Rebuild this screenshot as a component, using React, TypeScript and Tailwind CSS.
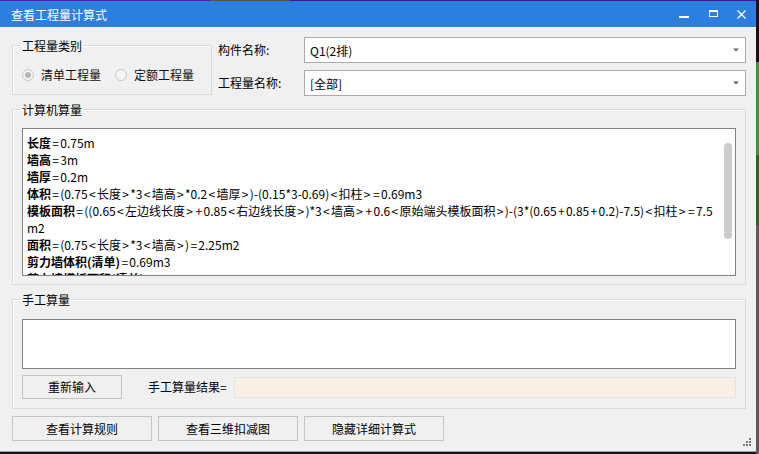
import React from "react";

const lines: [string, string][] = [
  ["长度", "=0.75m"],
  ["墙高", "=3m"],
  ["墙厚", "=0.2m"],
  ["体积", "=(0.75<长度>*3<墙高>*0.2<墙厚>)-(0.15*3-0.69)<扣柱>=0.69m3"],
  ["模板面积", "=((0.65<左边线长度>+0.85<右边线长度>)*3<墙高>+0.6<原始端头模板面积>)-(3*(0.65+0.85+0.2)-7.5)<扣柱>=7.5"],
  ["", "m2"],
  ["面积", "=(0.75<长度>*3<墙高>)=2.25m2"],
  ["剪力墙体积(清单)", "=0.69m3"],
  ["剪力墙模板面积(清单)", "=7.5m2"],
];

function Formula({ text }: { text: string }) {
  const parts = text.split(/([<>=+])/);
  return (
    <>
      {parts.map((p, i) =>
        /^[<>=+]$/.test(p) ? (
          <span key={i} className="mx-[1.3px]">{p}</span>
        ) : (
          <span key={i}>{p}</span>
        )
      )}
    </>
  );
}

function Arrow() {
  return (
    <svg width="6" height="4" viewBox="0 0 6 4" className="shrink-0">
      <path d="M0 0.5 H6 L3 3.5 Z" fill="#606060" />
    </svg>
  );
}

function Combo({ text }: { text: string }) {
  return (
    <div className="w-[442px] h-[26px] border border-[#ababab] bg-white flex items-center pl-[5px] pr-[6px]">
      <span className="flex-1 text-[12px] leading-[17px] text-black">{text}</span>
      <Arrow />
    </div>
  );
}

function Radio({ checked, label }: { checked?: boolean; label: string }) {
  return (
    <div className="flex items-center">
      <div className="w-[12px] h-[12px] rounded-full border border-[#c6c6c6] bg-[#f4f4f4] flex items-center justify-center">
        {checked && <div className="w-[6px] h-[6px] rounded-full bg-[#b4b4b4]" />}
      </div>
      <span className="ml-[7px] text-[12px] leading-[17px] text-[#111]">{label}</span>
    </div>
  );
}

function Btn({ label, w }: { label: string; w: string }) {
  return (
    <div className={`${w} h-full border border-[#c4c4c4] bg-[#f0f0f0] flex items-center justify-center text-[12px] text-black`}>
      {label}
    </div>
  );
}

export default function App() {
  return (
    <div className="w-[759px] h-[454px] bg-[#141414] overflow-hidden font-['Noto_Sans_CJK_SC',sans-serif] flex">
      <div className="flex flex-col w-[756px]">
        <div className="h-[1px] flex">
          <div className="w-[210px] bg-[#4a22b0]" />
          <div className="w-[80px] bg-[#555]" />
          <div className="flex-1 bg-[#3b1a90]" />
        </div>
        <div className="w-[756px] h-[450px] bg-[#f0f0f0] flex flex-col relative">
          {/* title bar */}
          <div className="h-[26px] bg-[#2d7fdf] flex items-center pl-[11px] text-white text-[12px] shrink-0">
            <span className="flex-1 leading-[17px]">查看工程量计算式</span>
            <div className="w-[10px] h-[2px] bg-white mr-[20px] mt-[6px]" />
            <div className="w-[9px] h-[7px] border border-white border-t-2 mr-[19px] mt-[-1px]" />
            <svg width="9" height="9" viewBox="0 0 9 9" className="mr-[10px]">
              <path d="M0.5 0.5 L8.5 8.5 M8.5 0.5 L0.5 8.5" stroke="white" strokeWidth="1.3" />
            </svg>
          </div>

          <div className="pl-[12px] flex flex-col">
            {/* top row */}
            <div className="mt-[10px] flex h-[58px]">
              <fieldset className="w-[200px] h-[58px] border border-[#d9d9d9] shadow-[inset_1px_1px_0_#fff] px-[9px]">
                <legend className="-ml-[2px] px-[2px] text-[12px] leading-[17px] text-black">工程量类别</legend>
                <div className="flex items-center mt-[12px] h-[17px]">
                  <Radio checked label="清单工程量" />
                  <div className="ml-[14px]">
                    <Radio label="定额工程量" />
                  </div>
                </div>
              </fieldset>
              <div className="ml-[6px] flex flex-col gap-[7px]">
                <div className="flex items-center">
                  <span className="w-[86px] text-[12px] text-black">构件名称:</span>
                  <Combo text="Q1(2排)" />
                </div>
                <div className="flex items-center">
                  <span className="w-[86px] text-[12px] text-black">工程量名称:</span>
                  <Combo text="[全部]" />
                </div>
              </div>
            </div>

            {/* computer */}
            <fieldset className="mt-[6px] w-[734px] h-[184px] border border-[#d9d9d9] shadow-[inset_1px_1px_0_#fff] px-[9px]">
              <legend className="-ml-[2px] px-[2px] text-[12px] leading-[17px] text-black">计算机算量</legend>
              <div className="mt-[10px] w-[714px] h-[148px] border border-[#828282] bg-white relative overflow-hidden pl-[4px] pt-[5px]">
                {lines.map(([b, r], i) => (
                  <div key={i} className="h-[17px] leading-[17px] text-[12px] text-black whitespace-nowrap">
                    {b && <span className="font-bold">{b}</span>}
                    <Formula text={r} />
                  </div>
                ))}
                <div className="absolute left-[701px] top-[14px] w-[8px] h-[96px] rounded-full bg-[#cdcdcd]" />
              </div>
            </fieldset>

            {/* manual */}
            <fieldset className="mt-[6px] w-[734px] h-[118px] border border-[#d9d9d9] shadow-[inset_1px_1px_0_#fff] px-[9px]">
              <legend className="-ml-[2px] px-[2px] text-[12px] leading-[17px] text-black">手工算量</legend>
              <div className="mt-[11px] w-[714px] h-[50px] border border-[#828282] bg-white" />
              <div className="mt-[6px] flex items-center h-[24px]">
                <div className="w-[100px] h-[24px] border border-[#c4c4c4] flex items-center justify-center text-[12px] text-black">重新输入</div>
                <span className="ml-[26px] w-[86px] text-[12px] text-black">手工算量结果=</span>
                <div className="w-[502px] h-[21px] bg-[#faefe5] border border-[#e2e2e2]" />
              </div>
            </fieldset>

            {/* bottom buttons */}
            <div className="mt-[7px] h-[25px] flex gap-[6px]">
              <Btn label="查看计算规则" w="w-[140px]" />
              <Btn label="查看三维扣减图" w="w-[140px]" />
              <Btn label="隐藏详细计算式" w="w-[140px]" />
            </div>
          </div>

          <svg width="9" height="9" viewBox="0 0 9 9" className="absolute right-[4px] bottom-[4px]">
            <rect x="6" y="0" width="2" height="2" fill="#7a7a7a" />
            <rect x="3" y="3" width="2" height="2" fill="#7a7a7a" />
            <rect x="6" y="3" width="2" height="2" fill="#7a7a7a" />
            <rect x="0" y="6" width="2" height="2" fill="#7a7a7a" />
            <rect x="3" y="6" width="2" height="2" fill="#7a7a7a" />
            <rect x="6" y="6" width="2" height="2" fill="#7a7a7a" />
          </svg>
        </div>
        <div className="h-[1px] bg-[#9aa3c4]" />
      </div>
      <div className="w-[3px] flex flex-col">
        <div className="h-[62px] bg-[#141414]" />
        <div className="h-[93px] bg-[#2aa12a]" />
        <div className="h-[70px] bg-[#1e6d1e]" />
        <div className="flex-1 bg-[#5c5c5c]" />
      </div>
    </div>
  );
}
